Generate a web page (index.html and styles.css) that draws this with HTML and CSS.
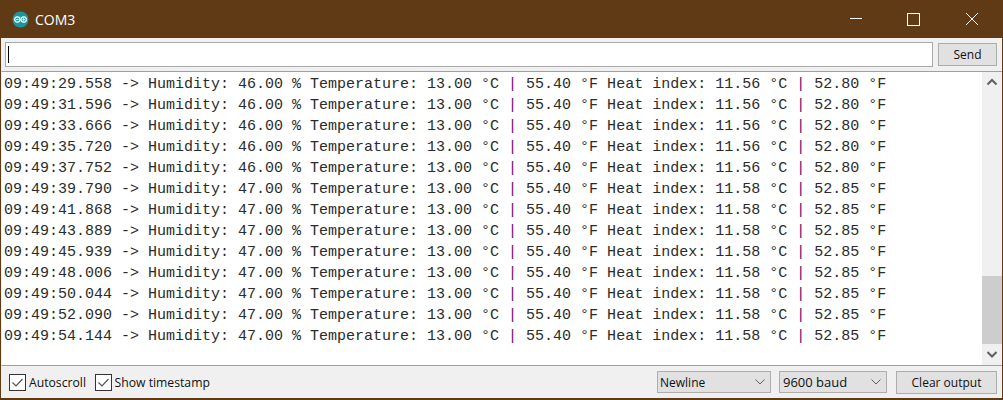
FILE: index.html
```html
<!DOCTYPE html>
<html lang="en">
<head>
<meta charset="utf-8">
<title>COM3</title>
<link rel="stylesheet" href="styles.css">
</head>
<body>
<div class="window">
  <header class="titlebar">
    <svg class="app-icon" width="17" height="17" viewBox="0 0 17 17"><circle cx="8.5" cy="8.5" r="8" fill="#1b97a0"/><circle cx="5.3" cy="8.5" r="2.6" fill="none" stroke="#fff" stroke-width="1.2"/><circle cx="11.7" cy="8.5" r="2.6" fill="none" stroke="#fff" stroke-width="1.2"/><path d="M4 8.5h2.6M10.4 8.5H13M11.7 7.2v2.6" stroke="#fff" fill="none"/></svg>
    <span class="title">COM3</span>
    <div class="controls">
      <span class="ctl"><svg width="46" height="38" viewBox="0 0 46 38"><path d="M17 18.5h12" stroke="#fff" fill="none"/></svg></span>
      <span class="ctl"><svg width="46" height="38" viewBox="0 0 46 38"><rect x="16.5" y="13.5" width="12" height="12" stroke="#fff" fill="none"/></svg></span>
      <span class="ctl"><svg width="46" height="38" viewBox="0 0 46 38"><path d="M17 13l12 12M29 13l-12 12" stroke="#fff" fill="none"/></svg></span>
    </div>
  </header>
  <div class="sendrow">
    <div class="input"><span class="caret"></span></div>
    <button class="btn send">Send</button>
  </div>
  <div class="monitor">
    <div class="log" id="log">
      <div class="line">09:49:29.558 -&gt; Humidity: 46.00 % Temperature: 13.00 °C <b>|</b> 55.40 °F Heat index: 11.56 °C <b>|</b> 52.80 °F</div>
      <div class="line">09:49:31.596 -&gt; Humidity: 46.00 % Temperature: 13.00 °C <b>|</b> 55.40 °F Heat index: 11.56 °C <b>|</b> 52.80 °F</div>
      <div class="line">09:49:33.666 -&gt; Humidity: 46.00 % Temperature: 13.00 °C <b>|</b> 55.40 °F Heat index: 11.56 °C <b>|</b> 52.80 °F</div>
      <div class="line">09:49:35.720 -&gt; Humidity: 46.00 % Temperature: 13.00 °C <b>|</b> 55.40 °F Heat index: 11.56 °C <b>|</b> 52.80 °F</div>
      <div class="line">09:49:37.752 -&gt; Humidity: 46.00 % Temperature: 13.00 °C <b>|</b> 55.40 °F Heat index: 11.56 °C <b>|</b> 52.80 °F</div>
      <div class="line">09:49:39.790 -&gt; Humidity: 47.00 % Temperature: 13.00 °C <b>|</b> 55.40 °F Heat index: 11.58 °C <b>|</b> 52.85 °F</div>
      <div class="line">09:49:41.868 -&gt; Humidity: 47.00 % Temperature: 13.00 °C <b>|</b> 55.40 °F Heat index: 11.58 °C <b>|</b> 52.85 °F</div>
      <div class="line">09:49:43.889 -&gt; Humidity: 47.00 % Temperature: 13.00 °C <b>|</b> 55.40 °F Heat index: 11.58 °C <b>|</b> 52.85 °F</div>
      <div class="line">09:49:45.939 -&gt; Humidity: 47.00 % Temperature: 13.00 °C <b>|</b> 55.40 °F Heat index: 11.58 °C <b>|</b> 52.85 °F</div>
      <div class="line">09:49:48.006 -&gt; Humidity: 47.00 % Temperature: 13.00 °C <b>|</b> 55.40 °F Heat index: 11.58 °C <b>|</b> 52.85 °F</div>
      <div class="line">09:49:50.044 -&gt; Humidity: 47.00 % Temperature: 13.00 °C <b>|</b> 55.40 °F Heat index: 11.58 °C <b>|</b> 52.85 °F</div>
      <div class="line">09:49:52.090 -&gt; Humidity: 47.00 % Temperature: 13.00 °C <b>|</b> 55.40 °F Heat index: 11.58 °C <b>|</b> 52.85 °F</div>
      <div class="line">09:49:54.144 -&gt; Humidity: 47.00 % Temperature: 13.00 °C <b>|</b> 55.40 °F Heat index: 11.58 °C <b>|</b> 52.85 °F</div>
    </div>
    <div class="scrollbar">
      <svg class="arrow" width="20" height="19" viewBox="0 0 20 19"><path d="M5.5 12.5l4.5-4.5 4.5 4.5" fill="none" stroke="#606060" stroke-width="2"/></svg>
      <div class="track"><div class="thumb"></div></div>
      <svg class="arrow" width="20" height="21" viewBox="0 0 20 21"><path d="M5.5 8l4.5 4.5 4.5-4.5" fill="none" stroke="#606060" stroke-width="2"/></svg>
    </div>
  </div>
  <footer class="statusbar">
    <label class="check"><svg width="17" height="17" viewBox="0 0 17 17"><rect x=".5" y=".5" width="16" height="16" fill="#fff" stroke="#333"/><path d="M3.5 8.5l3.5 3.5 6.5-7" fill="none" stroke="#555" stroke-width="1.2"/></svg><span>Autoscroll</span></label>
    <label class="check"><svg width="17" height="17" viewBox="0 0 17 17"><rect x=".5" y=".5" width="16" height="16" fill="#fff" stroke="#333"/><path d="M3.5 8.5l3.5 3.5 6.5-7" fill="none" stroke="#555" stroke-width="1.2"/></svg><span>Show timestamp</span></label>
    <div class="spacer"></div>
    <div class="select newline"><span>Newline</span><svg width="10" height="6" viewBox="0 0 10 6"><path d="M.5.5l4.5 4.5 4.5-4.5" fill="none" stroke="#606060"/></svg></div>
    <div class="select baud"><span>9600 baud</span><svg width="10" height="6" viewBox="0 0 10 6"><path d="M.5.5l4.5 4.5 4.5-4.5" fill="none" stroke="#606060"/></svg></div>
    <button class="btn clear">Clear output</button>
  </footer>
</div>
</body>
</html>
```
FILE: styles.css
```css
* { box-sizing: border-box; }
html, body { margin: 0; padding: 0; }
body { width: 1003px; height: 400px; overflow: hidden; font-family: "Open Sans", "Liberation Sans", sans-serif; }
.window { width: 1003px; height: 400px; background: #f0f0f0; border: solid #5f3a15; border-width: 0 1px 2px 1px; display: flex; flex-direction: column; }
.titlebar { height: 38px; margin: 0 -1px; background: #5f3a15; display: flex; align-items: center; padding-left: 12px; color: #fff; flex: none; }
.app-icon { flex: none; }
.title { margin-left: 6px; font-size: 14px; color: #fff; }
.controls { margin-left: auto; display: flex; padding-right: 2px; }
.ctl { width: 58px; height: 38px; display: flex; justify-content: center; }
.sendrow { height: 33px; flex: none; display: flex; padding: 4px 5px 0 4px; gap: 5px; }
.input { flex: 1; height: 25px; background: #fff; border: 1px solid #a9a9a9; padding: 3px 0 0 2px; }
.caret { display: block; width: 1px; height: 17px; background: #000; }
.btn { background: #e1e1e1; border: 1px solid #adadad; font-family: "Open Sans", "Liberation Sans", sans-serif; font-size: 12px; color: #111; padding: 0; }
.send { width: 59px; height: 23px; margin-top: 1px; }
.monitor { height: 295px; flex: none; display: flex; background: #fff; border-top: 1px solid #a0a0a0; border-bottom: 1px solid #a0a0a0; border-left: 1px solid #f0f0f0; }
.log { flex: 1; padding-top: 3px; padding-left: 2px; font-family: "Liberation Mono", monospace; font-size: 15px; line-height: 20.98px; color: #2b2b2b; }
.line { height: 20.98px; white-space: pre; }
.line b { font-weight: normal; color: #700a70; }
.scrollbar { width: 20px; background: #f0f0f0; display: flex; flex-direction: column; flex: none; }
.arrow { flex: none; display: block; }
.track { flex: 1; display: flex; flex-direction: column; justify-content: flex-end; }
.thumb { height: 68px; background: #cdcdcd; }
.statusbar { flex: 1; display: flex; align-items: center; padding: 0 5px 0 8px; font-size: 12.2px; color: #111; }
.check { display: flex; align-items: center; gap: 3px; margin-right: 8.6px; }
.spacer { flex: 1; }
.select { height: 22px; background: #e1e1e1; border: 1px solid #adadad; display: flex; align-items: center; justify-content: space-between; padding: 0 5px 0 2px; font-size: 12px; }
.newline { width: 114px; margin-right: 4px; }
.baud { width: 108px; margin-left: 4px; padding-left: 3px; font-size: 13px; }
.clear { width: 101px; height: 23px; margin-left: 9px; }
```
